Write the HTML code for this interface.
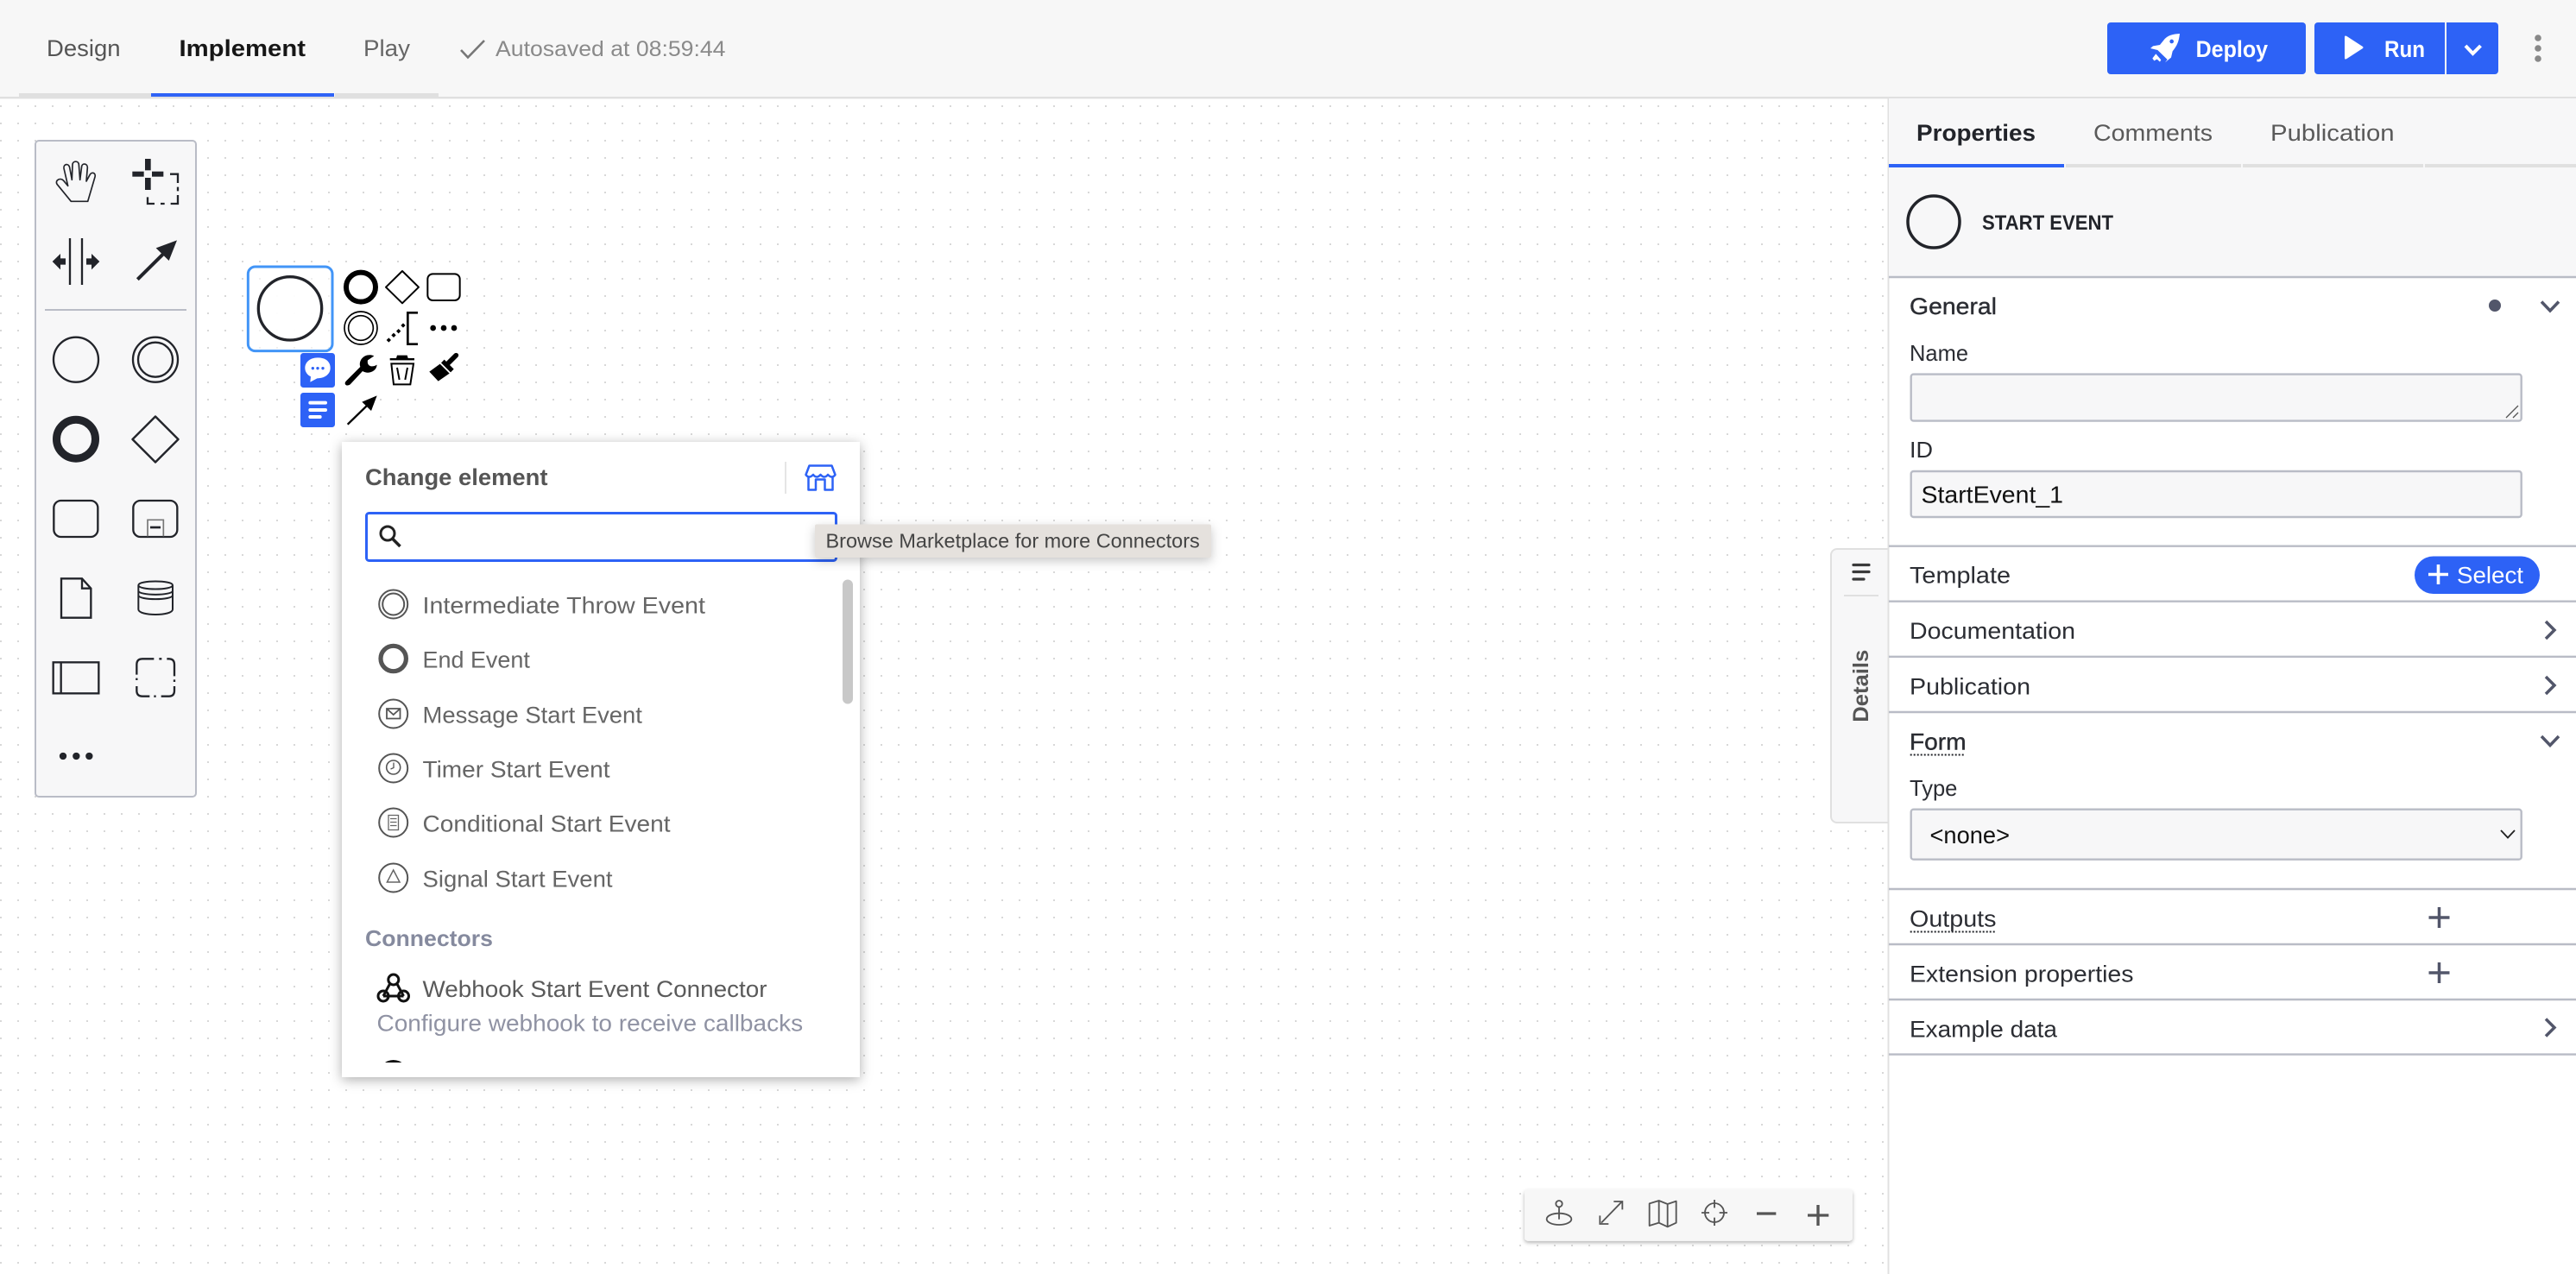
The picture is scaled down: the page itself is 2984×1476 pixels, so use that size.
<!DOCTYPE html>
<html lang="en">
<head>
<meta charset="utf-8">
<title>Implement</title>
<style>
html,body{margin:0;padding:0;background:#fff;width:2984px;height:1476px;overflow:hidden}
svg{display:block;font-family:"Liberation Sans",sans-serif}
text{white-space:pre}
.k{fill:none;stroke:#22242a;stroke-width:7}
.b{fill:none;stroke:#000;stroke-width:6}
.li{font-size:27px;fill:#666}
.pl{font-size:27px;fill:#2b2d33}
.ic{fill:none;stroke:#555;stroke-width:2}
.nv{fill:none;stroke:#52566a;stroke-width:3.5}
.zm{fill:none;stroke:#555;stroke-width:5.5}
.sep{stroke:#b9bcc6;stroke-width:2.4}
</style>
</head>
<body>
<svg xmlns="http://www.w3.org/2000/svg" width="2984" height="1476" viewBox="0 0 2984 1476">
<defs>
<pattern id="dots" x="0" y="2" width="20" height="20" patternUnits="userSpaceOnUse"><rect width="2" height="2" fill="#d8d8d8"/></pattern>
<filter id="sh" x="-10%" y="-10%" width="120%" height="120%"><feDropShadow dx="0" dy="3" stdDeviation="7" flood-color="#000" flood-opacity=".32"/></filter>
<filter id="sh2" x="-10%" y="-30%" width="120%" height="170%"><feDropShadow dx="0" dy="4" stdDeviation="6" flood-color="#000" flood-opacity=".22"/></filter>
<filter id="sh3" x="-5%" y="-20%" width="110%" height="150%"><feDropShadow dx="0" dy="2" stdDeviation="2" flood-color="#000" flood-opacity=".3"/></filter>
<clipPath id="pc"><rect x="396" y="660" width="600" height="571"/></clipPath>
</defs>

<!-- canvas -->
<rect width="2984" height="1476" fill="#fff"/>
<rect x="0" y="114" width="2188" height="1362" fill="url(#dots)"/>

<!-- header -->
<rect width="2984" height="112" fill="#f7f7f7"/>
<rect y="112" width="2984" height="2.4" fill="#e0e0e0"/>
<rect x="22" y="108" width="153" height="4" fill="#e0e0e0"/>
<rect x="175" y="108" width="212" height="4" fill="#2f63f6"/>
<rect x="388" y="108" width="120" height="4" fill="#e0e0e0"/>
<text x="54" y="65" font-size="27" fill="#555" textLength="85.500" lengthAdjust="spacingAndGlyphs">Design</text>
<text x="207.500" y="65" font-size="27" font-weight="700" fill="#161616" textLength="146.500" lengthAdjust="spacingAndGlyphs">Implement</text>
<text x="421" y="65" font-size="27" fill="#666" textLength="54" lengthAdjust="spacingAndGlyphs">Play</text>
<path d="M534 58 L542 66.500 L561 47" fill="none" stroke="#777" stroke-width="2.600"/>
<text x="574" y="65" font-size="25" fill="#8a8a8a" textLength="266.500" lengthAdjust="spacingAndGlyphs">Autosaved at 08:59:44</text>

<!-- deploy/run -->
<rect x="2441" y="26" width="230" height="60" rx="4" fill="#2d62f6"/>
<g transform="translate(2440 20) scale(.3333)" fill="#fff">
<path d="M255 57 C232 58 215 63 203 75 L186 96 L162 100 L153 108 L178 114 L212 147 L204 157 L225 140 L230 118 C245 100 252 85 255 57 Z"/>
<circle cx="227" cy="84" r="7" fill="#2d62f6"/>
<path d="M172 127 L160 143 L166 151 L176 146 L186 155 L190 148 Z"/>
</g>
<text x="2543.600" y="66" font-size="27" font-weight="700" fill="#fff" textLength="83.500" lengthAdjust="spacingAndGlyphs">Deploy</text>
<path d="M2681 30 a4 4 0 0 1 4 -4 H2832 V86 H2685 a4 4 0 0 1 -4 -4 Z" fill="#2d62f6"/>
<path d="M2834 26 H2890 a4 4 0 0 1 4 4 V82 a4 4 0 0 1 -4 4 H2834 Z" fill="#2d62f6"/>
<path d="M2716 43 Q2716 40.500 2718.500 42 L2737 54 Q2738 55 2737 56 L2718.500 68 Q2716 69.500 2716 67 Z" fill="#fff"/>
<text x="2762" y="66" font-size="27" font-weight="700" fill="#fff" textLength="47" lengthAdjust="spacingAndGlyphs">Run</text>
<path d="M2856 53 L2864.500 62 L2873.500 53" fill="none" stroke="#fff" stroke-width="4"/>
<circle cx="2940" cy="44" r="3.800" fill="#888"/><circle cx="2940" cy="56" r="3.800" fill="#888"/><circle cx="2940" cy="68" r="3.800" fill="#888"/>

<!-- palette -->
<rect x="41" y="163" width="186" height="760" rx="4" fill="#f7f7f8" stroke="#b9bcc6" stroke-width="2"/>
<g transform="translate(30 150) scale(.33333)">
<path class="k" style="stroke-width:5" stroke-linejoin="round" d="M157 250 L108 190 C100 176 120 166 131 178 L146 196 L132 135 C130 120 148 116 152 132 L160 175 L162 122 C163 108 183 108 184 122 L188 175 L194 128 C196 116 214 118 214 132 L210 180 L222 158 C228 146 244 150 240 165 L215 250 Z"/>
<g fill="#22242a">
<rect x="414" y="102" width="20" height="40"/><rect x="414" y="168" width="20" height="42"/>
<rect x="370" y="146" width="40" height="18"/><rect x="438" y="146" width="40" height="18"/>
</g>
<path class="k" d="M501 155 H528 V186 M528 200 V214 M528 228 V258 H503 M482 258 H468 M447 258 H423 V235"/>
<path class="k" d="M153 378 V540 M195 378 V540"/>
<path fill="#22242a" d="M92 459 L120 432 V448 H138 V470 H120 V487 Z M256 459 L228 432 V448 H210 V470 H228 V487 Z"/>
<path class="k" style="stroke-width:12" d="M388 521 L480 430"/>
<path fill="#22242a" d="M525 385 L452 412 L497 456 Z"/>
<path d="M66 627 H558" stroke="#b9bcc6" stroke-width="6"/>
<circle class="k" cx="174" cy="800" r="78"/>
<circle class="k" cx="450" cy="800" r="78"/><circle class="k" cx="450" cy="800" r="60"/>
</g>
<circle cx="88" cy="508.700" r="22.500" fill="none" stroke="#22242a" stroke-width="9"/>
<path d="M180 482.500 L206.500 509 L180 535.500 L153.500 509 Z" fill="none" stroke="#22242a" stroke-width="2.400" stroke-linejoin="round"/>
<g transform="translate(30 500) scale(.33333)">
<rect class="k" x="97" y="240" width="153" height="126" rx="25"/>
<rect class="k" x="373" y="240" width="153" height="126" rx="25"/>
<path d="M423 364 V307 H478 V364" fill="none" stroke="#777" stroke-width="5"/>
<path d="M432 333 H468" stroke="#22242a" stroke-width="8"/>
<path class="k" d="M123 511 H195 L226 545 V647 H123 Z M195 511 V545 H226"/>
<path class="k" style="stroke-width:6" d="M391 534 C391 516 510 516 510 534 C510 552 391 552 391 534 Z M391 534 V618 C391 642 510 642 510 618 V534 M391 553 C391 571 510 571 510 553 M391 569 C391 587 510 587 510 569"/>
<rect class="k" x="95" y="802" width="158" height="108"/>
<path class="k" d="M122 802 V910"/>
<path class="k" d="M385 845 V810 Q385 790 405 790 H445 M463 790 H472 M490 790 H497 Q516 790 516 810 V850 M516 862 V870 M516 885 V900 Q516 920 497 920 H470 M445 920 H452 M430 920 H405 Q385 920 385 900 V885 M385 857 V864"/>
<circle cx="129" cy="1128" r="12.500" fill="#22242a"/><circle cx="175" cy="1128" r="12.500" fill="#22242a"/><circle cx="220" cy="1128" r="12.500" fill="#22242a"/>
</g>

<!-- selected start event & context pad -->
<g transform="translate(280 300) scale(.33333)">
<rect x="340" y="30" width="430" height="420" fill="#fff"/><rect x="204" y="450" width="276" height="140" fill="#fff"/>
<rect x="22" y="27" width="293" height="293" rx="25" fill="#fff" fill-opacity=".6" stroke="#4295f7" stroke-width="9"/>
<circle cx="168" cy="172" r="110" fill="#fff" fill-opacity=".85" stroke="#22242a" stroke-width="10"/>
<circle cx="414" cy="98" r="51" fill="none" stroke="#000" stroke-width="18"/>
<path class="b" stroke-linejoin="round" d="M558 42 L615 98 L558 154 L501 98 Z"/>
<rect class="b" x="646" y="52" width="112" height="92" rx="18"/>
<circle class="b" style="stroke-width:5" cx="414" cy="240" r="57"/><circle class="b" style="stroke-width:5" cx="414" cy="240" r="43"/>
<g fill="#000"><path d="M511 274 l8 8 l-8 8 l-8 -8Z M528 257 l8 8 l-8 8 l-8 -8Z M545 243 l8 8 l-8 8 l-8 -8Z M561 223 l8 8 l-8 8 l-8 -8Z"/></g>
<path d="M612 187 H577 V296 H612" fill="none" stroke="#000" stroke-width="8"/>
<circle cx="665" cy="240" r="10"/><circle cx="702" cy="240" r="10"/><circle cx="738" cy="240" r="10"/>
<rect x="204" y="327" width="120" height="120" rx="10" fill="#2d62f6"/>
<path fill="#fff" d="M264 343 C296 343 308 360 308 379 C308 401 288 415 262 415 L238 428 L240 409 C228 403 220 392 220 379 C220 360 236 343 264 343 Z"/>
<circle cx="247" cy="380" r="5" fill="#2d62f6"/><circle cx="264" cy="380" r="5" fill="#2d62f6"/><circle cx="282" cy="380" r="5" fill="#2d62f6"/>
<rect x="204" y="465" width="120" height="120" rx="10" fill="#2d62f6"/>
<path d="M238 500 H291 M238 525 H291 M238 549 H272" stroke="#fff" stroke-width="12" stroke-linecap="round"/>
<path fill="#000" d="M363 424 L412 375 C404 350 430 325 460 337 L438 352 C434 370 450 380 470 368 C468 392 440 402 420 390 L378 435 C366 446 352 435 363 424 Z"/>
<path fill="#000" d="M540 335 H575 L578 345 H600 V352 H515 V345 H537 Z"/>
<path d="M520 364 H597 L586 436 H528 Z M540 378 L548 420 M576 378 L568 420" fill="none" stroke="#000" stroke-width="6"/>
<path d="M745 335 L718 362" stroke="#000" stroke-width="17" stroke-linecap="round"/>
<path fill="#000" d="M704 350 L737 383 L726 394 L693 361 Z M689 365 L722 398 L683 425 L652 392 Z"/>
<path class="b" style="stroke-width:7" d="M368 575 L435 510"/>
<path fill="#000" d="M470 475 L418 497 L450 528 Z"/>
</g>

<!-- popup -->
<rect x="396" y="512" width="600" height="736" fill="#fff" filter="url(#sh)"/>
<text x="423" y="562" font-size="27" font-weight="700" fill="#555" textLength="211.500" lengthAdjust="spacingAndGlyphs">Change element</text>
<rect x="909" y="535" width="2" height="37" fill="#e5e5e5"/>
<path fill="none" stroke="#2d62f6" stroke-width="2.500" stroke-linejoin="round" d="M933.500 550 L937.500 539.500 H963.500 L967.500 550 Q964 555 959 550 Q955 555 950.500 550 Q946 555 942 550 Q937 555 933.500 550 Z M936.500 553 V567.500 H945 V555.500 H955.500 V567.500 H964.500 V553"/>
<rect x="424.500" y="594.500" width="544" height="55" rx="3" fill="#fff" stroke="#2d62f6" stroke-width="3"/>
<circle cx="449" cy="618" r="8" fill="none" stroke="#222" stroke-width="3"/>
<path d="M454.500 624 L463.500 633" stroke="#222" stroke-width="3.500"/>
<rect x="976" y="671.500" width="12" height="144" rx="6" fill="#c8c8c8"/>

<circle class="ic" cx="455.700" cy="700" r="16.500"/><circle class="ic" cx="455.700" cy="700" r="12.500"/>
<text class="li" x="489.500" y="710.500" textLength="327.400" lengthAdjust="spacingAndGlyphs">Intermediate Throw Event</text>
<circle cx="455.700" cy="763" r="14.700" fill="none" stroke="#555" stroke-width="5.200"/>
<text class="li" x="489.500" y="773.500" textLength="124.400" lengthAdjust="spacingAndGlyphs">End Event</text>
<circle class="ic" cx="455.700" cy="827" r="16.500"/>
<path d="M448 821 H463.500 V832.500 H448 Z M448 821 L455.700 828 L463.500 821" fill="none" stroke="#555" stroke-width="1.800"/>
<text class="li" x="489.500" y="837.500" textLength="254.400" lengthAdjust="spacingAndGlyphs">Message Start Event</text>
<circle class="ic" cx="455.700" cy="890" r="16.500"/><circle cx="455.700" cy="889" r="8" fill="none" stroke="#555" stroke-width="1.600"/>
<path d="M456 883.500 V889.500 L452.500 891" fill="none" stroke="#555" stroke-width="1.300"/>
<text class="li" x="489.500" y="900.500" textLength="217" lengthAdjust="spacingAndGlyphs">Timer Start Event</text>
<circle class="ic" cx="455.700" cy="953" r="16.500"/>
<path d="M450 944.500 H461.500 V961.500 H450 Z M452 948.500 H459.500 M452 952.500 H459.500 M452 956.500 H459.500" fill="none" stroke="#666" stroke-width="1.300"/>
<text class="li" x="489.500" y="963.500" textLength="287" lengthAdjust="spacingAndGlyphs">Conditional Start Event</text>
<circle class="ic" cx="455.700" cy="1017" r="16.500"/>
<path d="M455.700 1008 L463 1022 H448.400 Z" fill="none" stroke="#666" stroke-width="1.500"/>
<text class="li" x="489.500" y="1027.500" textLength="220" lengthAdjust="spacingAndGlyphs">Signal Start Event</text>
<text x="423" y="1096" font-size="26" font-weight="700" fill="#858a9e" textLength="148" lengthAdjust="spacingAndGlyphs">Connectors</text>
<g fill="none" stroke="#111" stroke-width="3">
<circle cx="455.800" cy="1135" r="6" /><circle cx="444" cy="1154" r="6"/><circle cx="467.500" cy="1154" r="6"/>
<path d="M451.500 1140 L444 1154 M460 1140 L467.500 1154 M444 1154 H467.500"/>
</g>
<text class="li" x="489.500" y="1155" style="fill:#5a5a5a" textLength="399" lengthAdjust="spacingAndGlyphs">Webhook Start Event Connector</text>
<text x="436.500" y="1194.500" font-size="27" fill="#8f92a3" textLength="493.600" lengthAdjust="spacingAndGlyphs">Configure webhook to receive callbacks</text>
<g clip-path="url(#pc)"><circle cx="455.700" cy="1245" r="17" fill="#111"/></g>

<!-- tooltip -->
<rect x="944" y="607.500" width="459" height="38.500" rx="2" fill="#e5e1dd" filter="url(#sh2)"/>
<text x="956.500" y="634.500" font-size="23.500" fill="#444" textLength="433.300" lengthAdjust="spacingAndGlyphs">Browse Marketplace for more Connectors</text>

<!-- bottom toolbar -->
<rect x="1766" y="1378.300" width="380" height="59.400" rx="4" fill="#f7f7f7" filter="url(#sh3)"/>
<g transform="translate(1740 1360) scale(.33333)">
<circle class="zm" cx="198" cy="104" r="11"/>
<path class="zm" d="M198 115 V158"/><ellipse class="zm" cx="198" cy="157" rx="43" ry="20"/>
<path class="zm" d="M345 170 L415 98 M388 96 H418 V124 M340 145 V174 H370"/>
<path class="zm" stroke-linejoin="round" d="M512 103 L545 93 L575 105 L605 95 V170 L575 184 L545 170 L512 180 Z M545 93 V170 M575 105 V184"/>
<circle class="zm" cx="738" cy="135" r="33"/>
<path class="zm" d="M738 90 V118 M738 152 V180 M693 135 H720 M755 135 H783"/>
<path class="zm" style="stroke-width:10" d="M885 138 H952 M1062 144 H1135 M1098 108 V180"/>
</g>

<!-- details tab -->
<rect x="2121" y="636" width="81" height="317" rx="7" fill="#f7f7f8" stroke="#e0e0e0" stroke-width="2"/>
<path d="M2147 654.500 H2165 M2147 662.500 H2165 M2147 671 H2159" stroke="#3a3a3a" stroke-width="3.200" stroke-linecap="round"/>
<path d="M2136 690 H2176" stroke="#e0e0e0" stroke-width="2"/>
<text transform="translate(2164 836.700) rotate(-90)" font-size="25" font-weight="700" fill="#555" textLength="84" lengthAdjust="spacingAndGlyphs">Details</text>

<!-- right panel -->
<rect x="2188" y="114" width="796" height="1362" fill="#fff"/>
<rect x="2186.500" y="114" width="2" height="1362" fill="#e0e0e0"/>
<rect x="2188" y="114" width="796" height="207" fill="#f7f7f8"/>
<rect x="2188" y="190" width="203" height="4" fill="#2d62f6"/>
<rect x="2393" y="190" width="203" height="4" fill="#e0e0e0"/>
<rect x="2598" y="190" width="209" height="4" fill="#e0e0e0"/>
<rect x="2809" y="190" width="175" height="4" fill="#e0e0e0"/>
<text x="2220" y="163" font-size="27" font-weight="700" fill="#22242a" textLength="138" lengthAdjust="spacingAndGlyphs">Properties</text>
<text x="2425" y="163" font-size="27" fill="#5a5a5a" textLength="138" lengthAdjust="spacingAndGlyphs">Comments</text>
<text x="2630" y="163" font-size="27" fill="#5a5a5a" textLength="143.600" lengthAdjust="spacingAndGlyphs">Publication</text>
<circle cx="2240" cy="257" r="30" fill="none" stroke="#22242a" stroke-width="3.500"/>
<text x="2296" y="266" font-size="24" font-weight="700" fill="#22242a" textLength="152" lengthAdjust="spacingAndGlyphs">START EVENT</text>

<path class="sep" d="M2188 321 H2984 M2188 632.700 H2984 M2188 696.700 H2984 M2188 760.800 H2984 M2188 825 H2984 M2188 1030 H2984 M2188 1094 H2984 M2188 1158 H2984 M2188 1221.600 H2984"/>

<text class="pl" x="2212" y="364" stroke="#2b2d33" stroke-width=".4" textLength="101" lengthAdjust="spacingAndGlyphs">General</text>
<circle cx="2890" cy="354" r="7" fill="#52566a"/>
<path class="nv" d="M2944 349.500 L2954 360 L2964 349.500"/>
<text class="pl" x="2212" y="418" style="font-size:26px" textLength="68" lengthAdjust="spacingAndGlyphs">Name</text>
<rect x="2213.700" y="433.600" width="707" height="54" rx="3" fill="#f7f7f8" stroke="#b9bcc6" stroke-width="2.400"/>
<path d="M2903 484 L2917 470 M2911 484 L2917 478" stroke="#555" stroke-width="1.300"/>
<text class="pl" x="2212" y="530" style="font-size:26px" textLength="27" lengthAdjust="spacingAndGlyphs">ID</text>
<rect x="2213.700" y="546" width="707" height="53" rx="3" fill="#f7f7f8" stroke="#b9bcc6" stroke-width="2.400"/>
<text x="2225.500" y="582.500" font-size="28" fill="#111" textLength="164.500" lengthAdjust="spacingAndGlyphs">StartEvent_1</text>

<text class="pl" x="2212" y="675.500" textLength="117" lengthAdjust="spacingAndGlyphs">Template</text>
<rect x="2797" y="644.500" width="145" height="43.500" rx="21.700" fill="#2d62f6"/>
<path d="M2813 665.500 H2836 M2824.500 654 V677" stroke="#fff" stroke-width="3.600"/>
<text x="2846" y="675.500" font-size="27" fill="#fff" textLength="77" lengthAdjust="spacingAndGlyphs">Select</text>

<text class="pl" x="2212" y="740" textLength="192" lengthAdjust="spacingAndGlyphs">Documentation</text>
<path class="nv" d="M2949 720 L2959 730 L2949 740"/>
<text class="pl" x="2212" y="804.500" textLength="140" lengthAdjust="spacingAndGlyphs">Publication</text>
<path class="nv" d="M2949 784 L2959 794 L2949 804"/>
<text class="pl" x="2212" y="868.500" stroke="#2b2d33" stroke-width=".4" textLength="65.600" lengthAdjust="spacingAndGlyphs">Form</text>
<path d="M2212.700 874.500 H2276" stroke="#22242a" stroke-width="2" stroke-dasharray="2 2"/>
<path class="nv" d="M2944 853 L2954 863.500 L2964 853"/>
<text class="pl" x="2212" y="922" style="font-size:26px" textLength="55.400" lengthAdjust="spacingAndGlyphs">Type</text>
<rect x="2213.700" y="937.700" width="707" height="58" rx="3" fill="#f7f7f8" stroke="#b9bcc6" stroke-width="2.400"/>
<text x="2235.500" y="977" font-size="28" fill="#111" textLength="92.500" lengthAdjust="spacingAndGlyphs">&lt;none&gt;</text>
<path d="M2897 962 L2905 970.500 L2913 962" fill="none" stroke="#222" stroke-width="1.800"/>
<text class="pl" x="2212" y="1073.500" textLength="100.500" lengthAdjust="spacingAndGlyphs">Outputs</text>
<path d="M2212.700 1079.500 H2311" stroke="#22242a" stroke-width="2" stroke-dasharray="2 2"/>
<path class="nv" d="M2813.500 1063 H2837.500 M2825.500 1051 V1075"/>
<text class="pl" x="2212" y="1137.500" textLength="259.500" lengthAdjust="spacingAndGlyphs">Extension properties</text>
<path class="nv" d="M2813.500 1127 H2837.500 M2825.500 1115 V1139"/>
<text class="pl" x="2212" y="1201.500" textLength="171" lengthAdjust="spacingAndGlyphs">Example data</text>
<path class="nv" d="M2949 1180.500 L2959 1190.500 L2949 1200.500"/>
</svg>
</body>
</html>
